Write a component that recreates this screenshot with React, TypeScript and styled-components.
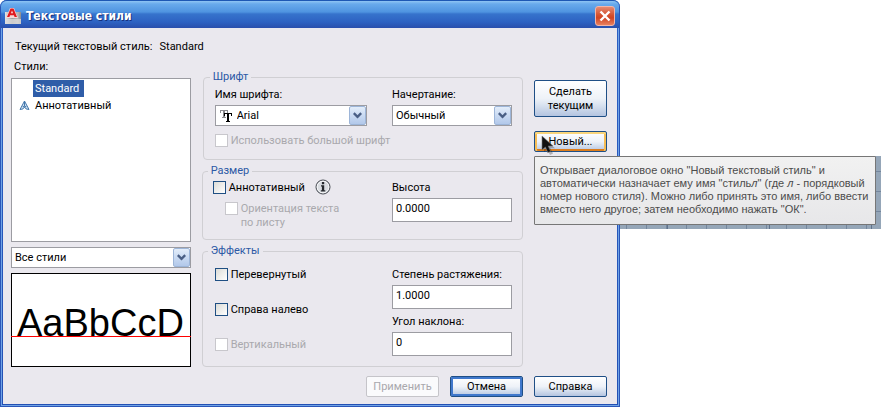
import React, { useId } from "react";
import styled, { createGlobalStyle, css } from "styled-components";

const ui = `Roboto, "Liberation Sans", sans-serif`;

const GlobalStyle = createGlobalStyle`
  *, *::before, *::after { box-sizing: border-box; }
  body { margin: 0; background: #fff; }
  button, input, select { font: inherit; color: inherit; margin: 0; }
`;

const Page = styled.div`
  display: grid;
  grid-template-columns: minmax(600px, 620fr) minmax(0, 261fr);
  font: 11px/14px ${ui};
  color: #000;
`;

const Dialog = styled.main`
  background: linear-gradient(#2c5fc4, #2350b4);
  border-radius: 7px 7px 0 0;
  padding: 0 3px 3px 3px;
  box-shadow: inset 1px 0 #2b56b8, inset -1px -1px #2b56b8, inset 2px 0 #6fa3e6, inset -2px -2px #6fa3e6;
`;

const TitleBar = styled.header`
  display: flex;
  align-items: center;
  gap: 5px;
  height: 28px;
  margin: 0 -2px;
  padding: 3px 4px 0 4px;
  border-radius: 6px 6px 0 0;
  border-top: 1px solid #1d58b4;
  background: linear-gradient(#8fc5f4 0, #68aaec 3px, #4f94e0 11px, #3673cc 13px, #2d62c2 21px, #2a4fac 100%);
`;

const Title = styled.h1`
  flex: 1;
  margin: 0;
  font: bold 12px/18px "DejaVu Sans Condensed", "DejaVu Sans", sans-serif;
  color: #fff;
  text-shadow: 1px 1px #16307c;
`;

const CloseButton = styled.button`
  display: grid;
  place-items: center;
  width: 20px;
  height: 20px;
  padding: 0;
  border: 1px solid #f3b5a8;
  border-radius: 3px;
  background: linear-gradient(#e58a72, #d4512f 45%, #cf4424 60%, #e8805f);
`;

const Body = styled.div`
  padding: 10px 10px 7px 8px;
  background: #eae8ee;
`;

const CurrentStyle = styled.p`
  display: flex;
  gap: 7px;
  margin: 0 0 4px;
  padding-left: 4px;
  line-height: 18px;
`;

const Columns = styled.div`
  display: grid;
  grid-template-columns: 180fr 322fr 73px;
  column-gap: 11px;
`;

const StylesColumn = styled.section`
  display: flex;
  flex-direction: column;
  gap: 5px;
`;

const ListTitle = styled.h2`
  margin: 0 0 -1px;
  padding-left: 3px;
  font: inherit;
`;

const StyleList = styled.ul`
  flex: 1;
  margin: 0;
  padding: 1px 7px;
  list-style: none;
  border: 1px solid #9c9ca2;
  background: #fff;
`;

const StyleItem = styled.li`
  display: grid;
  grid-template-columns: 14px auto;
  justify-content: start;
  align-items: center;
  line-height: 17px;
`;

const ItemName = styled.span<{ $selected?: boolean }>`
  padding: 0 5px 0 2px;
  ${(p) => p.$selected && css`
    background: #2f5da8;
    color: #fff;
  `}
`;

const Preview = styled.div`
  position: relative;
  height: 94px;
  padding: 25px 0 0 5px;
  border: 1px solid #000;
  background: #fff;
  font: 38px/48px "Liberation Sans", Arial, sans-serif;

  &::after {
    content: "";
    position: absolute;
    left: -1px;
    right: -1px;
    top: 62px;
    height: 1px;
    background: #f00;
  }
`;

const GroupsColumn = styled.div`
  display: flex;
  flex-direction: column;
  gap: 4px;
  padding-top: 10px;
`;

const Group = styled.fieldset<{ $inset?: boolean }>`
  display: grid;
  grid-template-columns: 1fr 120px;
  min-width: 0;
  margin: 0 0 0 ${(p) => (p.$inset ? 1 : 0)}px;
  padding: 0 10px 0 ${(p) => (p.$inset ? 11 : 10)}px;
  border: 1px solid #d0cfd3;
  border-radius: 4px;
`;

const GroupTitle = styled.legend`
  margin-left: -5px;
  padding: 0 3px;
  color: #2c59a5;
`;

const Stack = styled.div<{ $top: number; $gap: number; $bottom?: number; $left?: number }>`
  display: flex;
  flex-direction: column;
  align-items: flex-start;
  gap: ${(p) => p.$gap}px;
  padding: ${(p) => p.$top}px 0 ${(p) => p.$bottom ?? 0}px ${(p) => p.$left ?? 0}px;
`;

const Field = styled.div`
  display: flex;
  flex-direction: column;
  gap: 3px;
  width: 100%;
  max-width: 152px;
`;

const TextInput = styled.input`
  width: 100%;
  height: 24px;
  padding: 0 3px 4px;
  border: 1px solid #9c9ca2;
  border-radius: 0;
  background: #fff;
`;

const Combo = styled.div`
  display: flex;
  align-items: center;
  position: relative;
  height: 21px;
  border: 1px solid #9c9ca2;
  background: #fff;
  white-space: nowrap;
`;

const ComboIcon = styled.span`
  display: grid;
  padding-left: 4px;
`;

const Select = styled.select`
  appearance: none;
  flex: 1;
  min-width: 0;
  height: 19px;
  padding: 0 20px 0 3px;
  border: 0;
  background: transparent;
`;

const ComboArrow = styled.span`
  position: absolute;
  top: 0;
  right: 0;
  display: grid;
  place-items: center;
  width: 17px;
  height: 100%;
  border: 1px solid #9db5d8;
  border-radius: 2px;
  background: linear-gradient(#e3edfa, #c9daf2 50%, #b2c8ea);
  pointer-events: none;
`;

const CheckLabel = styled.label<{ $disabled?: boolean }>`
  display: flex;
  align-items: flex-start;
  gap: 3px;
  white-space: nowrap;
  color: ${(p) => (p.$disabled ? "#a9a8ad" : "#000")};
`;

const CheckBox = styled.input`
  appearance: none;
  flex: none;
  width: 13px;
  height: 13px;
  border: 1px solid #1f4f83;
  background: linear-gradient(135deg, #dcdcd7, #fff);

  &:disabled {
    border-color: #c8c7cc;
    background: #fff;
  }
`;

const AnnotativeRow = styled.div`
  display: flex;
  gap: 10px;
  height: 14px;
`;

const InfoMark = styled.svg`
  margin-top: -2px;
`;

const Actions = styled.div`
  display: flex;
  flex-direction: column;
  gap: 14px;
  padding-top: 20px;
`;

const Button = styled.button<{ $kind?: "hot" | "default" }>`
  width: 100%;
  min-height: 21px;
  padding: 0 4px;
  border: 1px solid #1f4f86;
  border-radius: 2px;
  background: linear-gradient(#fff, #eef2f8 50%, #dce5f1 66%, #b4c4e0);
  line-height: 13px;

  ${(p) => p.$kind === "hot" && css`
    box-shadow: inset 0 2px #f9d57c, inset 2px 0 #f5bd55, inset -2px 0 #f5bd55, inset 0 -2px #dc7d1c;
  `}
  ${(p) => p.$kind === "default" && css`
    box-shadow: inset 0 0 0 2px #4078cc;
  `}
  &:disabled {
    border-color: #c5c4c9;
    background: #fafafc;
    color: #a9a8ad;
  }
`;

const TallButton = styled(Button)`
  height: 37px;
  line-height: 14px;
`;

const HoverAnchor = styled.div`
  position: relative;
  height: 21px;
`;

const Pointer = styled.svg`
  position: absolute;
  left: 7px;
  top: 4px;
  pointer-events: none;
`;

const Tooltip = styled.div`
  position: absolute;
  z-index: 2;
  top: 25px;
  left: 0;
  width: 342px;
  padding: 7px 5px 8px;
  border: 1px solid #767676;
  border-radius: 1px;
  background: linear-gradient(#f1f1f1, #e7e7e9);
  color: #4c4c4c;
  font: 11px/13px "Liberation Sans", Arial, sans-serif;
  white-space: nowrap;
`;

const Footer = styled.footer`
  display: grid;
  grid-template-columns: 73px 73px 73px;
  justify-content: end;
  gap: 11px;
  margin-top: 9px;
`;

const DrawingArea = styled.div`
  height: 73px;
  margin-top: 156px;
  background:
    repeating-linear-gradient(90deg, transparent 0 47px, #5f728c 47px 48px, transparent 48px 102px),
    repeating-linear-gradient(90deg, transparent 0 6px, #74869d 6px 7px, transparent 7px 20px),
    repeating-linear-gradient(#95a6b8 0 15px, #74869d 15px 16px, #95a6b8 16px 20px);
`;

function Check({ label, disabled }: { label: React.ReactNode; disabled?: boolean }) {
  return (
    <CheckLabel $disabled={disabled}>
      <CheckBox type="checkbox" disabled={disabled} />
      <span>{label}</span>
    </CheckLabel>
  );
}

function TextField({ label, value }: { label: string; value: string }) {
  const id = useId();
  return (
    <Field>
      <label htmlFor={id}>{label}</label>
      <TextInput id={id} defaultValue={value} />
    </Field>
  );
}

function ComboBox({ id, value, icon, name }: { id?: string; value: string; icon?: React.ReactNode; name?: string }) {
  return (
    <Combo>
      {icon && <ComboIcon>{icon}</ComboIcon>}
      <Select id={id} aria-label={name}>
        <option>{value}</option>
      </Select>
      <ComboArrow>
        <svg width="9" height="7" viewBox="0 0 9 7">
          <path d="M0.8 1.2 4.5 4.8 8.2 1.2" fill="none" stroke="#4a5f85" strokeWidth="2.4" />
        </svg>
      </ComboArrow>
    </Combo>
  );
}

function ComboField({ label, value, icon }: { label: string; value: string; icon?: React.ReactNode }) {
  const id = useId();
  return (
    <Field>
      <label htmlFor={id}>{label}</label>
      <ComboBox id={id} value={value} icon={icon} />
    </Field>
  );
}

const AppIcon = () => (
  <svg width="16" height="17" viewBox="0 0 16 17">
    <defs>
      <linearGradient id="steel" x1="0" y1="0" x2="1" y2="0">
        <stop offset="0" stopColor="#e6e6e6" />
        <stop offset="0.45" stopColor="#9c9c9e" />
        <stop offset="0.8" stopColor="#b9b9ba" />
        <stop offset="1" stopColor="#8a8a8c" />
      </linearGradient>
    </defs>
    <path d="M0 4h16v12H0z" fill="url(#steel)" />
    <path d="M0 11h16v5H0z" fill="#dcdcdc" opacity="0.75" />
    <path d="M1 10 5 0h4l4 10z" fill="#f6d9d8" />
    <path d="M2 9 5.5 0.5h3L12 9H9.6L8.9 7.2H5.1L4.4 9zM5.9 5.3h2.2L7 2.4z" fill="#e0191f" fillRule="evenodd" />
  </svg>
);

const CloseIcon = () => (
  <svg width="12" height="12" viewBox="0 0 12 12">
    <path d="M1.5 1.5l9 9M10.5 1.5l-9 9" stroke="#fff" strokeWidth="2.4" />
  </svg>
);

const ScaleIcon = () => (
  <svg width="11" height="11" viewBox="0 0 11 11">
    <path d="M5.5 1 1 9.5l3-.6 1.5-2 1.5 2 3 .6zM5.5 1v5.5M3.6 6.2 5.5 7l1.9-.8" fill="#cfe0f0" stroke="#4478ac" />
  </svg>
);

const TrueTypeIcon = () => (
  <svg width="14" height="14" viewBox="0 0 14 14" shapeRendering="crispEdges">
    <path d="M0 1h8v3H7V2H5v6h1v1H2V8h1V2H1v2H0z" fill="#8b8b8f" />
    <path d="M4 4h8v3h-1V5H9v7h1v1H6v-1h1V5H5v2H4z" fill="#000" />
  </svg>
);

const InfoIcon = () => (
  <InfoMark width="16" height="16" viewBox="0 0 16 16" role="img" aria-label="Сведения">
    <circle cx="8" cy="8" r="7" fill="#d9dce1" stroke="#44484f" />
    <circle cx="8" cy="8" r="5.8" fill="none" stroke="#f4f5f7" />
    <path d="M6.9 3h2.3v2.2H6.9zM6 6.3h3.2v5h1.1v1.2H5.8v-1.2h1.1V7.5H6z" fill="#25282d" />
  </InfoMark>
);

export default function App() {
  return (
    <>
      <GlobalStyle />
      <Page>
        <Dialog>
          <TitleBar>
            <AppIcon />
            <Title>Текстовые стили</Title>
            <CloseButton aria-label="Закрыть"><CloseIcon /></CloseButton>
          </TitleBar>
          <Body>
            <CurrentStyle>
              <span>Текущий текстовый стиль:</span>
              <span>Standard</span>
            </CurrentStyle>
            <Columns>
              <StylesColumn>
                <ListTitle>Стили:</ListTitle>
                <StyleList>
                  <StyleItem><span /><ItemName $selected>Standard</ItemName></StyleItem>
                  <StyleItem><ScaleIcon /><ItemName>Аннотативный</ItemName></StyleItem>
                </StyleList>
                <ComboBox value="Все стили" name="Фильтр стилей" />
                <Preview>AaBbCcD</Preview>
              </StylesColumn>

              <GroupsColumn>
                <Group $inset>
                  <GroupTitle>Шрифт</GroupTitle>
                  <Stack $top={4} $gap={8} $bottom={11}>
                    <ComboField label="Имя шрифта:" value="Arial" icon={<TrueTypeIcon />} />
                    <Check label="Использовать большой шрифт" disabled />
                  </Stack>
                  <Stack $top={4} $gap={0}>
                    <ComboField label="Начертание:" value="Обычный" />
                  </Stack>
                </Group>
                <Group>
                  <GroupTitle>Размер</GroupTitle>
                  <Stack $top={3} $gap={7}>
                    <AnnotativeRow>
                      <Check label="Аннотативный" />
                      <InfoIcon />
                    </AnnotativeRow>
                    <Stack $top={0} $gap={0} $left={12}>
                      <Check label={<>Ориентация текста<br />по листу</>} disabled />
                    </Stack>
                  </Stack>
                  <Stack $top={3} $gap={0} $bottom={17}>
                    <TextField label="Высота" value="0.0000" />
                  </Stack>
                </Group>
                <Group>
                  <GroupTitle>Эффекты</GroupTitle>
                  <Stack $top={10} $gap={21} $left={2}>
                    <Check label="Перевернутый" />
                    <Check label="Справа налево" />
                    <Check label="Вертикальный" disabled />
                  </Stack>
                  <Stack $top={10} $gap={6} $bottom={10}>
                    <TextField label="Степень растяжения:" value="1.0000" />
                    <TextField label="Угол наклона:" value="0" />
                  </Stack>
                </Group>
              </GroupsColumn>

              <Actions>
                <TallButton>Сделать текущим</TallButton>
                <HoverAnchor>
                  <Button $kind="hot" aria-describedby="new-style-tip">Новый...</Button>
                  <Tooltip id="new-style-tip" role="tooltip">
                    Открывает диалоговое окно "Новый текстовый стиль" и<br />
                    автоматически назначает ему имя "стиль<i>л</i>" (где <i>л</i> - порядковый<br />
                    номер нового стиля). Можно либо принять это имя, либо ввести<br />
                    вместо него другое; затем необходимо нажать "ОК".
                  </Tooltip>
                  <Pointer width="16" height="20" viewBox="0 0 16 20">
                    <path d="M3 3v14l3.4-3 2.6 6 3-1.4-2.5-5.4H14z" fill="#000" opacity="0.25" />
                    <path d="M1 1v14l3.4-3 2.4 5.6 2.8-1.2L7.2 11H12z" fill="#111" stroke="#777" strokeWidth="0.6" />
                  </Pointer>
                </HoverAnchor>
              </Actions>
            </Columns>
            <Footer>
              <Button disabled>Применить</Button>
              <Button $kind="default">Отмена</Button>
              <Button>Справка</Button>
            </Footer>
          </Body>
        </Dialog>
        <DrawingArea />
      </Page>
    </>
  );
}
